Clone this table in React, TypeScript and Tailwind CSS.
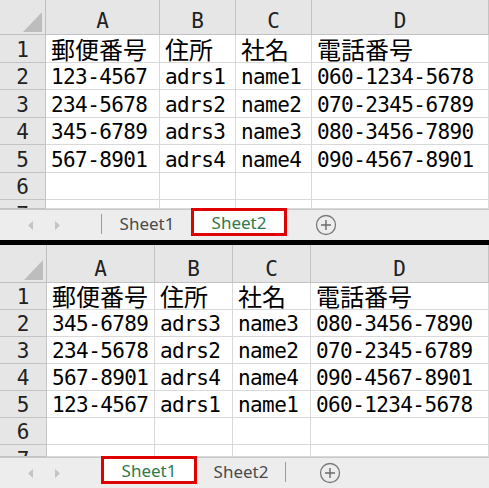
import React from "react";

const mono = "font-['DejaVu_Sans_Mono','Noto_Sans_CJK_JP',monospace]";
const cjk = "font-['Noto_Sans_CJK_JP',sans-serif]";

const HEAD = ["郵便番号", "住所", "社名", "電話番号"];

type SheetProps = {
  gridCls: string;
  headerH: string;
  rowH: string;
  partialH: string;
  rows: string[][];
  active: 1 | 2;
};

function Cell({ text }: { text: string }) {
  const isCjk = /[^\x00-\x7f]/.test(text);
  return (
    <div className="bg-white border-r border-b border-[#d9d9d9] pl-[5px] overflow-hidden whitespace-nowrap flex items-end">
      {isCjk ? (
        <span className={`${cjk} text-[24px] leading-[26px] text-black`}>{text}</span>
      ) : (
        <span className={`${mono} text-[21px] tracking-[-0.6px] leading-[24px] text-black`}>{text}</span>
      )}
    </div>
  );
}

function TabArrows() {
  return (
    <div className="flex items-center gap-[20px] pl-[28px] h-full">
      <svg width="6" height="9" viewBox="0 0 6 9">
        <polygon points="5,0 0,4.5 5,9" fill="#c4c4c4" />
      </svg>
      <svg width="6" height="9" viewBox="0 0 6 9">
        <polygon points="1,0 6,4.5 1,9" fill="#c4c4c4" />
      </svg>
    </div>
  );
}

function PlusButton() {
  return (
    <svg width="22" height="22" viewBox="0 0 22 22">
      <circle cx="11" cy="11" r="9.5" fill="none" stroke="#7a7a7a" strokeWidth="1.3" />
      <path d="M11 6v10M6 11h10" stroke="#6a6a6a" strokeWidth="1.4" />
    </svg>
  );
}

function Sheet({ gridCls, headerH, rowH, partialH, rows, active }: SheetProps) {
  const letters = ["A", "B", "C", "D"];
  const activeTab = (label: string) => (
    <div className="-mt-[2px] h-[28px] w-[96px] border-[3px] border-[#e00000] bg-white flex items-center justify-center">
      <span className="font-['Noto_Sans',sans-serif] text-[17px] text-[#2f7a4a] leading-none">{label}</span>
    </div>
  );
  const plainTab = (label: string) => (
    <div className="h-full w-[88px] flex items-center justify-center">
      <span className="font-['Noto_Sans',sans-serif] text-[17px] text-[#4a4a4a] leading-none -mt-[4px]">{label}</span>
    </div>
  );
  const sep = <div className="w-px h-[20px] mt-[4px] bg-[#9a9a9a]" />;

  return (
    <div className="bg-white">
      {/* column header */}
      <div className={`grid ${gridCls} ${headerH} bg-[#e6e6e6]`}>
        <div className="border-r border-b border-[#bfbfbf] flex items-end justify-end pr-[3px] pb-[2px]">
          <svg width="19" height="20" viewBox="0 0 19 20">
            <polygon points="19,0 19,20 0,20" fill="#bdbdbd" />
          </svg>
        </div>
        {letters.map((l) => (
          <div
            key={l}
            className={`border-r border-b border-[#c3c3c3] flex items-end justify-center ${mono} text-[21px] leading-[24px] text-[#222] pb-[1px]`}
          >
            {l}
          </div>
        ))}
      </div>
      {/* rows */}
      {[HEAD, ...rows, ["", "", "", ""], ["", "", "", ""]].map((r, i) => (
        <div key={i} className={`grid ${gridCls} ${i === 6 ? partialH : rowH} overflow-hidden`}>
          <div
            className={`bg-[#e6e6e6] border-r border-b border-[#c3c3c3] flex justify-center ${
              i === 6 ? "items-start pt-[3px]" : "items-end"
            } ${mono} text-[21px] leading-[24px] text-[#222] overflow-hidden`}
          >
            {i + 1}
          </div>
          {r.map((t, j) => (
            <Cell key={j} text={t} />
          ))}
        </div>
      ))}
      {/* tab bar */}
      <div className="h-[31px] bg-[#ededed] border-t border-[#c8c8c8] flex items-start">
        <div className="w-[101px] h-full">
          <TabArrows />
        </div>
        {active === 2 ? (
          <>
            {sep}
            <div className="w-[1px]" />
            {plainTab("Sheet1")}
            {activeTab("Sheet2")}
            <div className="ml-[28px] mt-[4px]">
              <PlusButton />
            </div>
          </>
        ) : (
          <>
            {activeTab("Sheet1")}
            {plainTab("Sheet2")}
            {sep}
            <div className="ml-[33px] mt-[4px]">
              <PlusButton />
            </div>
          </>
        )}
      </div>
    </div>
  );
}

export default function App() {
  const before = [
    ["123-4567", "adrs1", "name1", "060-1234-5678"],
    ["234-5678", "adrs2", "name2", "070-2345-6789"],
    ["345-6789", "adrs3", "name3", "080-3456-7890"],
    ["567-8901", "adrs4", "name4", "090-4567-8901"],
  ];
  const after = [
    ["345-6789", "adrs3", "name3", "080-3456-7890"],
    ["234-5678", "adrs2", "name2", "070-2345-6789"],
    ["567-8901", "adrs4", "name4", "090-4567-8901"],
    ["123-4567", "adrs1", "name1", "060-1234-5678"],
  ];

  return (
    <div className="w-[489px] h-[488px] overflow-hidden bg-white">
      <div className="h-[240px] overflow-hidden">
        <Sheet
          gridCls="grid-cols-[46px_114px_76px_76px_1fr]"
          headerH="h-[35px]"
          rowH="h-[27.5px]"
          partialH="h-[9px]"
          rows={before}
          active={2}
        />
      </div>
      <div className="h-[5px] bg-black" />
      <div className="h-[243px] overflow-hidden">
        <Sheet
          gridCls="grid-cols-[47px_108px_78px_78px_1fr]"
          headerH="h-[38px]"
          rowH="h-[27px]"
          partialH="h-[12px]"
          rows={after}
          active={1}
        />
      </div>
    </div>
  );
}
